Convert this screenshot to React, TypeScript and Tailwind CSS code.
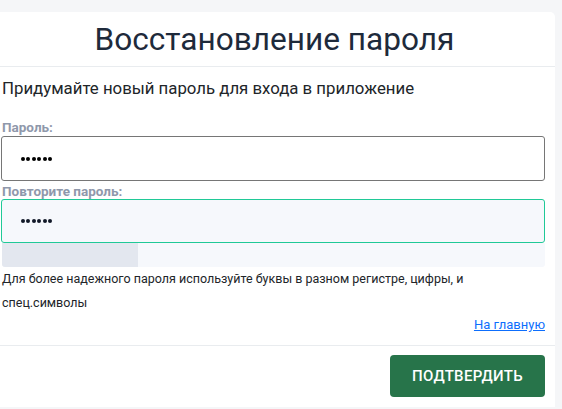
import React from "react";

function Dots({ color }: { color: string }) {
  return (
    <div className="flex gap-[1.4px]">
      {[0, 1, 2, 3, 4, 5].map((i) => (
        <span key={i} className={`block w-[4px] h-[4px] rounded-full ${color}`}></span>
      ))}
    </div>
  );
}

export default function App() {
  return (
    <div className="w-[562px] h-[409px] bg-[#f5f6f8] pt-[12px] overflow-hidden" style={{ fontFamily: "Roboto, 'Liberation Sans', sans-serif" }}>
      <div className="w-[555px] bg-white rounded-tr-[5px] pb-[10px]">
        <div className="h-[55px] border-b border-[#e9ecef] flex items-center justify-center">
          <h1 className="text-[31.6px] leading-none text-[#1e2a3b] font-normal pt-[2px] pr-[6px]">Восстановление пароля</h1>
        </div>
        <div className="pl-[2px] pr-[10px]">
          <p className="text-[16.8px] text-[#212529] mt-[11px] leading-[20px]">Придумайте новый пароль для входа в приложение</p>
          <label className="block mt-[22px] text-[13.5px] font-bold text-[#8f98ab] leading-[14px]">Пароль:</label>
          <div className="mt-[2px] h-[45px] border border-[#767676] rounded-[3px] flex items-center pl-[19px] ml-[-1px]">
            <Dots color="bg-black" />
          </div>
          <label className="block mt-[3px] text-[13.5px] font-bold text-[#8f98ab] leading-[14px]">Повторите пароль:</label>
          <div className="mt-[1px] h-[44px] border border-[#20c997] bg-[#f6f8fc] rounded-[3px] flex items-center pl-[19px] ml-[-1px]">
            <Dots color="bg-[#111827]" />
          </div>
          <div className="h-[24px] bg-[#f6f8fc] rounded-b-[3px] flex">
            <div className="w-[136px] bg-[#e3e7ef] rounded-bl-[3px]"></div>
          </div>
          <p className="text-[12.5px] text-[#212529] leading-[24px] mt-[0px]">Для более надежного пароля используйте буквы в разном регистре, цифры, и<br />спец.символы</p>
          <div className="flex justify-end mt-[0px]">
            <a href="#" className="text-[13px] text-[#0d6efd] underline leading-[20px]">На главную</a>
          </div>
        </div>
        <div className="border-t border-[#e9ecef] mt-[10px] pt-[9px] pr-[10px] flex justify-end">
          <button className="w-[155px] h-[42px] bg-[#27744a] rounded-[4px] text-white text-[15px] font-medium tracking-[0.3px]">ПОДТВЕРДИТЬ</button>
        </div>
      </div>
    </div>
  );
}
